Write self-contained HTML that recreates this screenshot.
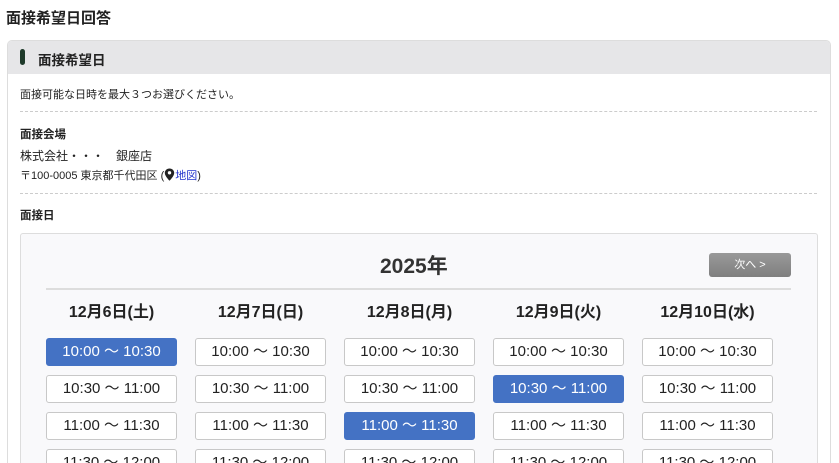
<!DOCTYPE html>
<html style="height:463px;overflow:hidden"><head><meta charset="utf-8"><style>
*{box-sizing:border-box;margin:0;padding:0}
body{width:839px;height:463px;overflow:hidden;background:#fff;font-family:"Liberation Sans","Noto Sans CJK JP",sans-serif;color:#222;position:relative}
.a{position:absolute;white-space:nowrap}
.card{position:absolute;left:7px;top:40px;width:824px;height:423px;border:1px solid #ddd;border-bottom:none;border-radius:5px 5px 0 0;overflow:hidden}
.hd{position:absolute;left:0;top:0;width:100%;height:33px;background:#e6e6e8}
.cal{position:absolute;left:20px;top:233px;width:798px;height:230px;background:#f9f9fb;border:1px solid #ddd;border-bottom:none;border-radius:3px 3px 0 0}
.btn{position:absolute;width:131px;height:28px;border:1px solid #c8c8c8;border-radius:3px;background:#fff;font-size:15px;text-align:center;line-height:26px;color:#222}
.sel{background:#4472c4;border-color:#4472c4;color:#fff}
.day{position:absolute;width:131px;text-align:center;font-size:16px;font-weight:bold;top:298px}
.dash{position:absolute;left:20px;width:797px;border-top:1px dashed #ccc}
</style></head><body>
<div class="a" style="left:6px;top:7px;font-size:15px;font-weight:bold">面接希望日回答</div>
<div class="card"><div class="hd"></div>
<div style="position:absolute;left:12px;top:8px;width:5px;height:16px;background:#1e3a2a;border-radius:3px"></div>
<div class="a" style="left:30px;top:8px;font-size:13.5px;font-weight:bold">面接希望日</div>
</div>
<div class="a" style="left:20px;top:86px;font-size:11px">面接可能な日時を最大３つお選びください。</div>
<div class="dash" style="top:111px"></div>
<div class="a" style="left:20px;top:126px;font-size:11.5px;font-weight:bold">面接会場</div>
<div class="a" style="left:20px;top:147px;font-size:12px">株式会社・・・　銀座店</div>
<div class="a" style="left:20px;top:167px;font-size:11px">〒100-0005 東京都千代田区 (<svg width="11" height="13" viewBox="0 0 11 13" style="vertical-align:-2px"><path d="M5.5 0.5C2.7 0.5 0.8 2.5 0.8 5c0 3.2 4.7 7.7 4.7 7.7S10.2 8.2 10.2 5C10.2 2.5 8.3 0.5 5.5 0.5z" fill="#222"/><circle cx="5.5" cy="4.8" r="1.7" fill="#fff"/></svg><span style="color:#2233cc">地図</span>)</div>
<div class="dash" style="top:193px"></div>
<div class="a" style="left:20px;top:207px;font-size:11.5px;font-weight:bold">面接日</div>
<div class="cal"></div>
<div class="a" style="left:380px;top:250px;font-size:21px;font-weight:bold;color:#333">2025年</div>
<div class="a" style="left:709px;top:253px;width:82px;height:24px;border-radius:3px;background:linear-gradient(#999,#7f7f7f);color:#fff;font-size:11px;text-align:center;line-height:24px">次へ &gt;</div>
<div style="position:absolute;left:46px;top:288px;width:745px;height:2px;background:#ddd"></div>
<div class="day" style="left:46px">12月6日(土)</div>
<div class="day" style="left:195px">12月7日(日)</div>
<div class="day" style="left:344px">12月8日(月)</div>
<div class="day" style="left:493px">12月9日(火)</div>
<div class="day" style="left:642px">12月10日(水)</div>
<div id="g"></div>
<script>
var xs=[46,195,344,493,642],ts=["10:00 ～ 10:30","10:30 ～ 11:00","11:00 ～ 11:30","11:30 ～ 12:00"],sel={"0,0":1,"3,1":1,"2,2":1},h="";
for(var r=0;r<4;r++)for(var c=0;c<5;c++)h+='<div class="btn'+(sel[c+","+r]?' sel':'')+'" style="left:'+xs[c]+'px;top:'+(338+r*37)+'px">'+ts[r]+'</div>';
document.getElementById("g").innerHTML=h;
</script>
</body></html>
